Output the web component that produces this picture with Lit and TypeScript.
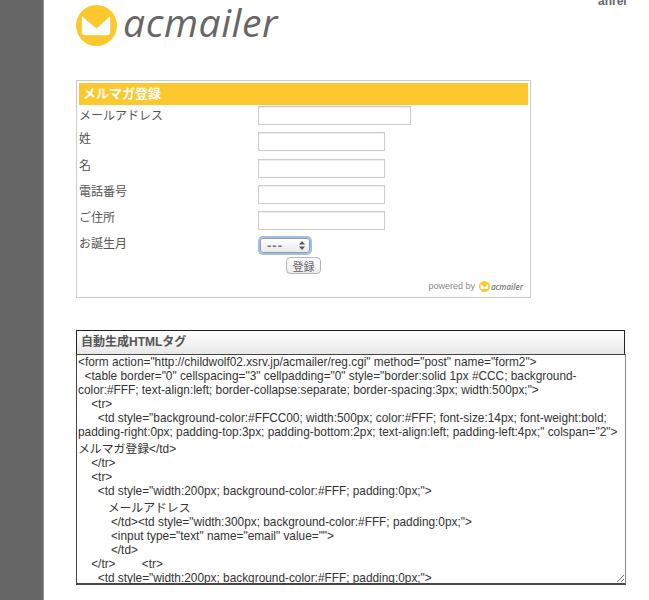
import { LitElement, html, css } from "lit";
import { customElement } from "lit/decorators.js";

const CODE = `<form action="http://childwolf02.xsrv.jp/acmailer/reg.cgi" method="post" name="form2">
  <table border="0" cellspacing="3" cellpadding="0" style="border:solid 1px #CCC; background-color:#FFF; text-align:left; border-collapse:separate; border-spacing:3px; width:500px;">
    <tr>
      <td style="background-color:#FFCC00; width:500px; color:#FFF; font-size:14px; font-weight:bold; padding-right:0px; padding-top:3px; padding-bottom:2px; text-align:left; padding-left:4px;" colspan="2">メルマガ登録</td>
    </tr>
    <tr>
      <td style="width:200px; background-color:#FFF; padding:0px;">
         メールアドレス
          </td><td style="width:300px; background-color:#FFF; padding:0px;">
          <input type="text" name="email" value="">
          </td>
    </tr>        <tr>
      <td style="width:200px; background-color:#FFF; padding:0px;">
         姓
          </td>`;

const Mark = (size: number) => html`<svg width=${size} height=${size} viewBox="0 0 42 42" aria-hidden="true">
  <circle cx="21" cy="21" r="21" fill="#fcc82e"></circle>
  <path d="M6 11.5 L21 24 L35 11.5 V28 a3 3 0 0 1 -3 3 H9 a3 3 0 0 1 -3 -3 Z" fill="#fff"></path>
</svg>`;

@customElement("app-root")
export class AppRoot extends LitElement {
  static styles = css`
    :host {
      display: block;
      height: 600px;
      overflow: hidden;
      font-family: "Liberation Sans", "Noto Sans CJK JP", sans-serif;
      color: #444;
      background: #fff;
    }
    .page { display: flex; height: 600px; }
    .side { box-sizing: border-box; width: 44px; flex: none; background: #666; border-right: 1px solid #8f8f8f; }
    .main { flex: 1; min-width: 0; padding-left: 32px; position: relative; }
    .user {
      position: absolute; top: -6px; left: 554px;
      font-size: 12px; font-weight: bold; color: #666; line-height: 14px;
    }
    .brand { display: flex; align-items: center; gap: 6px; height: 41px; margin: 5px 0 34px 0; }
    .brand-name {
      font-family: "Open Sans", sans-serif; font-style: italic; font-weight: 400;
      font-size: 39px; line-height: 42px; color: #666; letter-spacing: 0.6px;
      margin-top: -7px;
    }
    .form-box {
      box-sizing: border-box; width: 455px; height: 218px;
      border: 1px solid #ccc; padding: 2px; display: flex; flex-direction: column;
    }
    .form-title {
      height: 22px; background: #fcc82e; color: #fff; font-size: 13px; font-weight: bold;
      line-height: 22px; padding-left: 4px;
    }
    .rows { display: flex; flex-direction: column; }
    .row { display: grid; grid-template-columns: 179px 1fr; height: 26.25px; font-size: 12px; color: #555; }
    .row label { line-height: 16px; }
    .row.first label { padding-top: 3px; }
    .row.last { height: 18px; }
    .row input {
      box-sizing: border-box; width: 127px; height: 19px; margin: 1px 0 0 0;
      border: 1px solid #ccc; box-shadow: inset 0 1px 1px #eee; background: #fff; padding: 0;
    }
    .row input.wide { width: 153px; }
    .sel-wrap { position: relative; width: 50px; height: 15px; margin: 2px 0 0 2px; }
    select {
      appearance: none; -webkit-appearance: none; box-sizing: border-box; display: block;
      width: 50px; height: 15px; border: 1px solid #9a9a9a; border-radius: 3px; padding: 0 0 0 6px;
      background: linear-gradient(#fff, #eaeaea); box-shadow: 0 0 0 2px #9cc0ea;
      font: bold 13px "Liberation Sans", sans-serif; letter-spacing: 1px; color: #777; line-height: 13px; outline: none;
    }
    .sel-wrap svg { position: absolute; right: 5px; top: 3px; pointer-events: none; }
    .btn-row { display: flex; justify-content: flex-start; padding: 3px 0 0 207px; }
    button {
      box-sizing: border-box; width: 35px; height: 17px; padding: 0; border: 1px solid #b5b5b5; border-radius: 4px;
      background: linear-gradient(#fff, #ececec); font: 11px "Noto Sans CJK JP", sans-serif; color: #666; line-height: 14px;
    }
    .powered {
      margin-top: 5px; display: flex; justify-content: flex-end; align-items: center; gap: 4px;
      height: 14px; padding-right: 5px; font-size: 9px; color: #888;
    }
    .mini { font-family: "Open Sans", sans-serif; font-style: italic; font-weight: 600; font-size: 8px; color: #777; }
    .mini-wrap { display: flex; align-items: center; gap: 1px; }
    .code-box { margin-top: 32px; width: 550px; }
    .code-head {
      box-sizing: border-box; width: 549px; height: 25px; border: 1px solid #222; border-bottom: 1px solid #555;
      background: linear-gradient(#fff, #e8e8e8); font-size: 12px; font-weight: bold; color: #555;
      line-height: 23px; padding-left: 4px;
    }
    textarea {
      display: block; box-sizing: border-box; width: 550px; height: 231px; margin: -1px 0 0 0;
      border: 1px solid #444; border-bottom: 2px solid #444; border-right-color: #888; padding: 0 1px;
      font-family: "Liberation Sans", "Noto Sans CJK JP", sans-serif; font-size: 11.85px; color: #333;
      overflow: hidden; resize: both; outline: none; background: #fff;
    }
  `;

  private row(label: string, wide = false) {
    return html`<div class="row ${wide ? "first" : ""}"><label>${label}</label><div><input class=${wide ? "wide" : ""} type="text" /></div></div>`;
  }

  render() {
    return html`<div class="page">
      <div class="side"></div>
      <div class="main">
        <div class="user">anrei</div>
        <div class="brand">${Mark(41)}<span class="brand-name">acmailer</span></div>
        <div class="form-box">
          <div class="form-title">メルマガ登録</div>
          <div class="rows">
            ${this.row("メールアドレス", true)}
            ${this.row("姓")}
            ${this.row("名")}
            ${this.row("電話番号")}
            ${this.row("ご住所")}
            <div class="row last"><label>お誕生月</label>
              <div class="sel-wrap">
                <select><option>---</option></select>
                <svg width="6" height="9" viewBox="0 0 6 9"><path d="M3 0 L6 3.5 H0 Z M3 9 L0 5.5 H6 Z" fill="#555"></path></svg>
              </div>
            </div>
          </div>
          <div class="btn-row"><button>登録</button></div>
          <div class="powered"><span>powered by</span><span class="mini-wrap">${Mark(11)}<span class="mini">acmailer</span></span></div>
        </div>
        <div class="code-box">
          <div class="code-head">自動生成HTMLタグ</div>
          <textarea readonly .value=${CODE}></textarea>
        </div>
      </div>
    </div>`;
  }
}
